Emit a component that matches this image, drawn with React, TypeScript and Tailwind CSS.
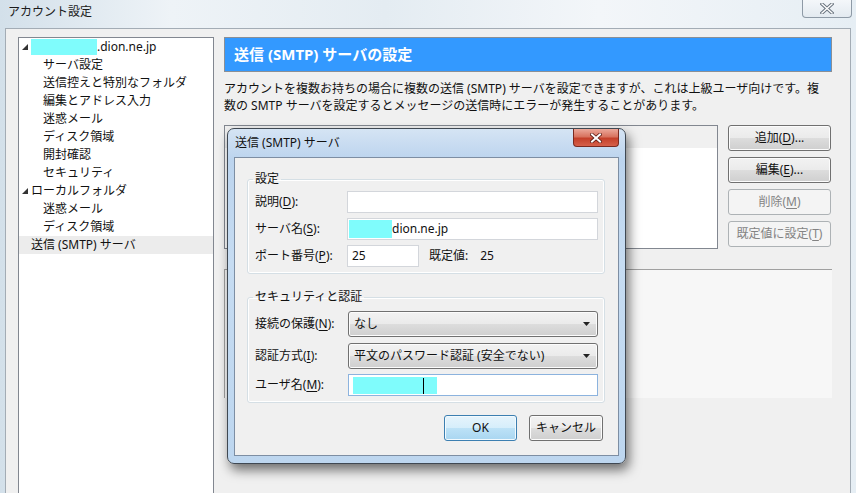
import React from 'react';

const tree = [
  { label: '.dion.ne.jp', root: true, masked: true },
  { label: 'サーバ設定' },
  { label: '送信控えと特別なフォルダ' },
  { label: '編集とアドレス入力' },
  { label: '迷惑メール' },
  { label: 'ディスク領域' },
  { label: '開封確認' },
  { label: 'セキュリティ' },
  { label: 'ローカルフォルダ', root: true },
  { label: '迷惑メール' },
  { label: 'ディスク領域' },
  { label: '送信 (SMTP) サーバ', top: true, selected: true },
];

function Expander() {
  return (
    <svg width="6" height="6" viewBox="0 0 6 6" className="shrink-0">
      <polygon points="6,0 6,6 0,6" fill="#333" />
    </svg>
  );
}

function Key({ k }: { k: string }) {
  return <span className="underline underline-offset-[2px]">{k}</span>;
}

function WinButton({
  children,
  disabled,
  primary,
  className = '',
}: {
  children: React.ReactNode;
  disabled?: boolean;
  primary?: boolean;
  className?: string;
}) {
  const look = disabled
    ? 'border-[#adb2b5] bg-[#f4f4f4] text-[#838383]'
    : primary
      ? 'border-[#3c7fb1] bg-[linear-gradient(180deg,#e6f4fc_0%,#d6eefb_49%,#bde2f7_50%,#a9d6f1_100%)] text-[#111] shadow-[inset_0_0_0_1px_#f2fafe]'
      : 'border-[#707070] bg-[linear-gradient(180deg,#f2f2f2_0%,#ebebeb_49%,#dddddd_50%,#cfcfcf_100%)] text-[#111] shadow-[inset_0_0_0_1px_#fcfcfc]';
  return (
    <div className={`flex h-[26px] items-center justify-center rounded-[3px] border text-[12px] ${look} ${className}`}>
      {children}
    </div>
  );
}

function ComboArrow() {
  return (
    <svg width="7" height="4" viewBox="0 0 7 4">
      <polygon points="0,0 7,0 3.5,4" fill="#222" />
    </svg>
  );
}

export default function App() {
  return (
    <div className="relative h-[493px] w-[856px] overflow-hidden bg-[linear-gradient(90deg,#d3e0ea_0%,#eef3f7_20%,#e4ecf2_45%,#f3f6f9_70%,#e6eef4_100%)] font-['Noto_Sans','Noto_Sans_CJK_JP',sans-serif] text-[12px] text-[#111]">
      {/* outer window title bar */}
      <div className="flex h-[28px] items-start justify-between pl-[8px]">
        <span className="mt-[4px] leading-[16px] text-[#1b1b1b]">アカウント設定</span>
        <div className="mr-[4px] flex h-[18px] w-[50px] items-center justify-center rounded-b-[4px] border border-t-0 border-[#8e9aa6] bg-[linear-gradient(180deg,#f4f7fa,#e3eaf0)]">
          <svg width="14" height="11" viewBox="0 0 14 11">
            <path d="M2 1 L12 10 M12 1 L2 10" stroke="#6b7580" strokeWidth="3.4" strokeLinecap="square" />
            <path d="M2 1 L12 10 M12 1 L2 10" stroke="#ffffff" strokeWidth="1.4" strokeLinecap="square" />
          </svg>
        </div>
      </div>

      {/* client area */}
      <div className="mx-[5px] flex h-[470px] gap-[10px] border border-b-0 border-[#a3acb5] bg-[#f0f0f0] pl-[12px] pt-[8px]">
        {/* tree */}
        <div className="h-[460px] w-[196px] shrink-0 border border-[#828790] bg-white">
          {tree.map((item, i) => (
            <div
              key={i}
              className={`flex h-[18px] items-center whitespace-nowrap leading-[18px] ${item.selected ? 'bg-[#ececec]' : ''} ${item.root ? 'pl-[3px]' : item.top ? 'pl-[12px]' : 'pl-[24px]'}`}
            >
              {item.root && (
                <>
                  <Expander />
                  <span className="w-[3px]" />
                </>
              )}
              {item.masked && <span className="h-[16px] w-[66px] bg-[#7ffcfc]" />}
              <span>{item.label}</span>
            </div>
          ))}
        </div>

        {/* right panel */}
        <div className="flex w-[608px] flex-col">
          <div className="flex h-[35px] items-center border border-[#8a8f96] bg-[#3399ff] pl-[9px] text-[15px] font-bold text-white">
            送信 (SMTP) サーバの設定
          </div>
          <div className="mt-[8px] whitespace-nowrap leading-[17px]">
            <div>アカウントを複数お持ちの場合に複数の送信 (SMTP) サーバを設定できますが、これは上級ユーザ向けです。複</div>
            <div>数の SMTP サーバを設定するとメッセージの送信時にエラーが発生することがあります。</div>
          </div>
          <div className="mt-[11px] flex">
            <div className="h-[124px] w-[494px] border border-[#828790] bg-white">
              <div className="h-[22px] bg-[#f0f0f0]" />
            </div>
            <div className="ml-[10px] flex w-[103px] flex-col gap-[6px]">
              <WinButton>
                追加(<Key k="D" />)...
              </WinButton>
              <WinButton>
                編集(<Key k="E" />)...
              </WinButton>
              <WinButton disabled>
                削除(<Key k="M" />)
              </WinButton>
              <WinButton disabled>
                既定値に設定(<Key k="T" />)
              </WinButton>
            </div>
          </div>
          <div className="mt-[20px] h-[129px] border-l border-t border-[#a0a0a0] bg-[#f7f7f7]" />
        </div>
      </div>

      {/* modal dialog */}
      <div className="absolute left-[227px] top-[128px] flex h-[336px] w-[399px] flex-col rounded-[7px] border border-[#3f4852] bg-[linear-gradient(180deg,#d5e4f4_0%,#bcd4ee_9%,#c6dcf2_40%,#bdd6ef_100%)] px-[6px] pb-[7px] shadow-[3px_6px_12px_rgba(0,0,0,0.55)]">
        <div className="relative flex h-[28px] items-center pl-[1px]">
          <span className="leading-[16px] text-[#111]">送信 (SMTP) サーバ</span>
          <div className="absolute right-0 top-0 flex h-[18px] w-[46px] items-center justify-center rounded-b-[4px] border border-t-0 border-[#7a2a20] bg-[linear-gradient(180deg,#eba89a_0%,#d8735f_45%,#c4402a_55%,#d6604a_100%)]">
            <svg width="12" height="10" viewBox="0 0 12 10">
              <path d="M2 1.5 L10 8.5 M10 1.5 L2 8.5" stroke="#5a1a12" strokeWidth="3.6" strokeLinecap="square" />
              <path d="M2 1.5 L10 8.5 M10 1.5 L2 8.5" stroke="#ffffff" strokeWidth="2" strokeLinecap="square" />
            </svg>
          </div>
        </div>
        <div className="flex flex-1 flex-col border border-[#7d8ea3] bg-[#f0f0f0] pl-[12px] pr-[13px]">
          <fieldset className="mt-[13px] rounded-[3px] border border-[#d5dfe5] pb-[6px] pl-[7px] pr-[6px] pt-[4px] shadow-[inset_0_0_0_1px_#ffffff]">
            <legend className="ml-[-2px] px-[2px] leading-[16px]">設定</legend>
            <div className="flex flex-col gap-[5px]">
              <div className="flex items-center">
                <span className="w-[92px]">
                  説明(<Key k="D" />):
                </span>
                <div className="h-[22px] flex-1 border border-[#d3d6db] bg-white" />
              </div>
              <div className="flex items-center">
                <span className="w-[92px]">
                  サーバ名(<Key k="S" />):
                </span>
                <div className="flex h-[22px] flex-1 items-center border border-[#d3d6db] bg-white pl-[1px]">
                  <span className="h-[18px] w-[43px] bg-[#7ffcfc]" />
                  <span className="leading-[18px]">dion.ne.jp</span>
                </div>
              </div>
              <div className="flex items-center">
                <span className="w-[92px]">
                  ポート番号(<Key k="P" />):
                </span>
                <div className="flex h-[22px] w-[72px] items-center border border-[#d3d6db] bg-white pl-[4px]">25</div>
                <span className="ml-[10px]">既定値:</span>
                <span className="ml-[12px]">25</span>
              </div>
            </div>
          </fieldset>

          <fieldset className="mt-[15px] rounded-[3px] border border-[#d5dfe5] pb-[6px] pl-[7px] pr-[6px] pt-[6px] shadow-[inset_0_0_0_1px_#ffffff]">
            <legend className="ml-[-2px] px-[2px] leading-[16px]">セキュリティと認証</legend>
            <div className="flex flex-col">
              <div className="flex items-center">
                <span className="w-[93px]">
                  接続の保護(<Key k="N" />):
                </span>
                <div className="flex h-[26px] flex-1 items-center justify-between rounded-[3px] border border-[#707070] bg-[linear-gradient(180deg,#f2f2f2_0%,#ebebeb_49%,#dddddd_50%,#cfcfcf_100%)] pl-[5px] pr-[7px] shadow-[inset_0_0_0_1px_#fcfcfc]">
                  <span>なし</span>
                  <ComboArrow />
                </div>
              </div>
              <div className="mt-[6px] flex items-center">
                <span className="w-[93px]">
                  認証方式(<Key k="I" />):
                </span>
                <div className="flex h-[26px] flex-1 items-center justify-between rounded-[3px] border border-[#707070] bg-[linear-gradient(180deg,#f2f2f2_0%,#ebebeb_49%,#dddddd_50%,#cfcfcf_100%)] pl-[5px] pr-[7px] shadow-[inset_0_0_0_1px_#fcfcfc]">
                  <span>平文のパスワード認証 (安全でない)</span>
                  <ComboArrow />
                </div>
              </div>
              <div className="mt-[5px] flex items-center">
                <span className="w-[93px]">
                  ユーザ名(<Key k="M" />):
                </span>
                <div className="relative flex h-[22px] flex-1 items-center border border-[#8cb3de] bg-white pl-[4px]">
                  <span className="h-[17px] w-[84px] bg-[#7ffcfc]" />
                  <span className="absolute left-[74px] top-[3px] h-[16px] w-px bg-black" />
                </div>
              </div>
            </div>
          </fieldset>

          <div className="mr-[2px] mt-[12px] flex justify-end gap-[12px]">
            <WinButton primary className="w-[73px]">
              OK
            </WinButton>
            <WinButton className="w-[74px]">キャンセル</WinButton>
          </div>
        </div>
      </div>
    </div>
  );
}
